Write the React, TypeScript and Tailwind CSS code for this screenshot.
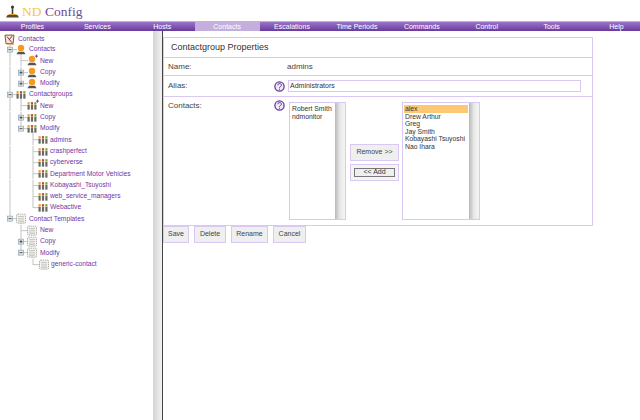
const NAV = ["Profiles", "Services", "Hosts", "Contacts", "Escalations", "Time Periods", "Commands", "Control", "Tools", "Help"];

type IconKind = "root" | "person" | "personNew" | "group" | "groupNew" | "tpl";

const Icon = ({ kind, x, y }: { kind: IconKind; x: number; y: number }) => {
  if (kind === "person" || kind === "personNew") {
    return (
      <g transform={`translate(${x} ${y})`}>
        <circle cx="0" cy="-1.6" r="3.2" fill="#f59a1f" />
        <path d="M-4.5 4.5 L-3 2 L3 2 L4.5 4.5 Z" fill="#55554c" />
        {kind === "personNew" && <path d="M3 -4.5h3M4.5 -6v3" stroke="#7a3fb0" strokeWidth="1" />}
      </g>
    );
  }
  if (kind === "group" || kind === "groupNew") {
    return (
      <g transform={`translate(${x} ${y})`}>
        <rect x="-4.5" y="-3.5" width="2.2" height="2.4" fill="#e8a030" />
        <rect x="-1.1" y="-3.5" width="2.2" height="2.4" fill="#c04a38" />
        <rect x="2.3" y="-3.5" width="2.2" height="2.4" fill="#7fa838" />
        <rect x="-4.5" y="-0.8" width="2.2" height="4.8" fill="#6a6a62" />
        <rect x="-1.1" y="-0.8" width="2.2" height="4.8" fill="#6a6a62" />
        <rect x="2.3" y="-0.8" width="2.2" height="4.8" fill="#6a6a62" />
        {kind === "groupNew" && <path d="M4 -4.5h3M5.5 -6v3" stroke="#7a3fb0" strokeWidth="1" />}
      </g>
    );
  }
  if (kind === "tpl") {
    return (
      <g transform={`translate(${x} ${y})`}>
        <rect x="-4.5" y="-4.5" width="9" height="9" rx="1" fill="#f4f4f2" stroke="#8c8c88" strokeWidth="0.7" strokeDasharray="1.4 0.8" />
        <path d="M-3 -2.2h6M-3 -0.4h6M-3 1.4h6M-3 3h6" stroke="#b5b5b0" strokeWidth="0.7" />
      </g>
    );
  }
  return (
    <g transform={`translate(${x} ${y})`}>
      <path d="M-5 -4.5h9l-1 8.5h-7z" fill="#f5ead0" stroke="#6b4a2a" strokeWidth="0.9" />
      <path d="M-3 -3l5 6M2 -3.5l-3 4" stroke="#8a2a60" strokeWidth="1" />
      <path d="M-3 4.5h7" stroke="#e09030" strokeWidth="1" />
    </g>
  );
};

type Row = {
  label: string;
  icon: IconKind;
  iconX: number;
  labelX: number;
  exp?: { x: number; open: boolean };
  // vertical guides through this row: [x, from, to]
  v?: [number, number, number][];
  // horizontal connector: [from, to]
  h?: [number, number];
};

const H = 11.3;

const ROWS: Row[] = [
  { label: "Contacts", icon: "person", iconX: 21, labelX: 29, exp: { x: 10, open: true }, v: [[10, 0, H], [21, 8, H]] },
  { label: "New", icon: "personNew", iconX: 32, labelX: 40, v: [[10, 0, H], [21, 0, H]], h: [21, 28] },
  { label: "Copy", icon: "person", iconX: 32, labelX: 40, exp: { x: 21, open: false }, v: [[10, 0, H], [21, 0, H]] },
  { label: "Modify", icon: "person", iconX: 32, labelX: 40, exp: { x: 21, open: false }, v: [[10, 0, H], [21, 0, 6]] },
  { label: "Contactgroups", icon: "group", iconX: 21, labelX: 29, exp: { x: 10, open: true }, v: [[10, 0, H], [21, 8, H]] },
  { label: "New", icon: "groupNew", iconX: 32, labelX: 40, v: [[10, 0, H], [21, 0, H]], h: [21, 28] },
  { label: "Copy", icon: "group", iconX: 32, labelX: 40, exp: { x: 21, open: false }, v: [[10, 0, H], [21, 0, H]] },
  { label: "Modify", icon: "group", iconX: 32, labelX: 40, exp: { x: 21, open: true }, v: [[10, 0, H], [21, 0, 6], [33, 8, H]] },
  ...["admins", "crashperfect", "cyberverse", "Department Motor Vehicles", "Kobayashi_Tsuyoshi", "web_service_managers", "Webactive"].map(
    (label, i): Row => ({
      label,
      icon: "group",
      iconX: 43,
      labelX: 50,
      v: [[10, 0, H], [33, 0, i === 6 ? 6 : H]],
      h: [33, 39],
    }),
  ),
  { label: "Contact Templates", icon: "tpl", iconX: 21, labelX: 29, exp: { x: 10, open: true }, v: [[10, 0, 6], [21, 8, H]] },
  { label: "New", icon: "tpl", iconX: 32, labelX: 40, v: [[21, 0, H]], h: [21, 28] },
  { label: "Copy", icon: "tpl", iconX: 32, labelX: 40, exp: { x: 21, open: false }, v: [[21, 0, H]] },
  { label: "Modify", icon: "tpl", iconX: 32, labelX: 40, exp: { x: 21, open: true }, v: [[21, 0, 6], [33, 8, H]] },
  { label: "generic-contact", icon: "tpl", iconX: 44, labelX: 51, v: [[33, 0, 6]], h: [33, 40] },
];

const TreeRow = ({ row }: { row: Row }) => {
  const cy = H / 2;
  return (
    <div className="flex h-[11.3px] items-center">
      <svg width={row.labelX} height={H} className="shrink-0 overflow-visible">
        {row.v?.map(([x, a, b], i) => (
          <line key={i} x1={x} x2={x} y1={a} y2={b} stroke="#c4c4c0" strokeWidth="1" />
        ))}
        {row.h && <line x1={row.h[0]} x2={row.h[1]} y1={cy} y2={cy} stroke="#c4c4c0" strokeWidth="1" />}
        {row.exp && <line x1={row.exp.x} x2={row.iconX - 4} y1={cy} y2={cy} stroke="#c4c4c0" strokeWidth="1" />}
        {row.exp && (
          <g>
            <rect x={row.exp.x - 2.5} y={cy - 2.5} width="5" height="5" fill="#dfe6ea" stroke="#8fa4ae" strokeWidth="0.7" />
            <path d={`M${row.exp.x - 1.5} ${cy}h3`} stroke="#333" strokeWidth="0.8" />
            {!row.exp.open && <path d={`M${row.exp.x} ${cy - 1.5}v3`} stroke="#333" strokeWidth="0.8" />}
          </g>
        )}
        <Icon kind={row.icon} x={row.iconX} y={cy} />
      </svg>
      <span className="whitespace-nowrap text-[6.7px] leading-none text-[#7036a6]">{row.label}</span>
    </div>
  );
};

const HelpIcon = () => (
  <svg width="11" height="11" viewBox="0 0 11 11" className="shrink-0">
    <circle cx="5.5" cy="5.5" r="4.6" fill="#efe8f6" stroke="#6a3a98" strokeWidth="1.3" />
    <path d="M3.8 4.2a1.8 1.6 0 1 1 2.6 1.4c-.6.3-.9.6-.9 1.2" fill="none" stroke="#6a3a98" strokeWidth="1" />
    <circle cx="5.5" cy="8.2" r=".6" fill="#6a3a98" />
  </svg>
);

const Btn = ({ label, w }: { label: string; w: string }) => (
  <div className={`flex h-[17px] items-center justify-center border border-[#d9c9f2] bg-[#efefef] text-[7px] text-[#444] ${w}`}>{label}</div>
);

const ListBox = ({ items, width, selected }: { items: string[]; width: string; selected?: string }) => (
  <div className={`flex h-[118px] border border-[#d9c9f2] bg-white ${width}`}>
    <div className="flex-1 pl-[1px] pr-[1px] pt-[2px] text-[6.8px] leading-[7.6px] text-[#333]">
      {items.map((item) => (
        <div key={item} className={item === selected ? "bg-[#fdc873] pl-[1px]" : "pl-[1px]"}>
          {item}
        </div>
      ))}
    </div>
    <div className="w-[10px] bg-gradient-to-r from-[#b8b8b8] via-[#e8e8e8] to-[#f5f5f5]" />
  </div>
);

export default function App() {
  return (
    <div className="h-[420px] w-[640px] overflow-hidden bg-white font-['Liberation_Sans',sans-serif]">
      <header className="flex h-[21px] items-center pl-[6px] pt-[2px]">
        <svg width="13" height="13" viewBox="0 0 13 13">
          <path d="M0 12.5h13l-1.5-2.5h-10z" fill="#5a4a30" />
          <path d="M6.5 1.5v8.5" stroke="#4a4030" strokeWidth="1.6" />
          <circle cx="6.5" cy="2" r="1.5" fill="#3a3226" />
          <path d="M2.5 9.5h8" stroke="#d8a030" strokeWidth="1" />
        </svg>
        <span className="ml-[3px] font-['Liberation_Serif',serif] text-[13.5px] leading-none">
          <span className="text-[#f6c545]">ND</span> <span className="text-[#6f4a9e]">Config</span>
        </span>
      </header>
      <nav className="grid h-[10px] grid-cols-[repeat(10,64.9px)] overflow-hidden border-t border-[#c7ace6] bg-gradient-to-b from-[#9c74c8] to-[#6a3a9e]">
        {NAV.map((item) => (
          <div
            key={item}
            className={`flex items-center justify-center text-[7px] leading-none text-white ${item === "Contacts" ? "bg-[#c4aedd]" : ""}`}
          >
            {item}
          </div>
        ))}
      </nav>
      <div className="flex h-[389px]">
        <aside className="w-[153px] pt-[4px]">
          <div className="flex h-[9px] items-center">
            <svg width={18} height={H} className="shrink-0 overflow-visible">
              <Icon kind="root" x={10} y={H / 2} />
            </svg>
            <span className="whitespace-nowrap text-[6.7px] leading-none text-[#7036a6]">Contacts</span>
          </div>
          {ROWS.map((row, i) => (
            <TreeRow key={i} row={row} />
          ))}
        </aside>
        <div className="w-[10px] border-r border-[#444] bg-gradient-to-r from-[#d4d4d4] to-[#f2f2f2]" />
        <main className="w-[430px] pt-[6px]">
          <section className="border border-[#d9c9f2]">
            <div className="flex h-[20px] items-center border-b border-[#d9c9f2] pl-[7px] text-[9px] text-[#333]">Contactgroup Properties</div>
            <div className="flex h-[18px] items-center border-b border-[#d9c9f2] pl-[4px] text-[8px] text-[#444]">
              <span className="w-[119px]">Name:</span>
              <span>admins</span>
            </div>
            <div className="flex h-[21px] items-center border-b border-[#d9c9f2] pl-[4px] text-[8px] text-[#444]">
              <span className="w-[106px]">Alias:</span>
              <HelpIcon />
              <div className="ml-[3px] flex h-[12px] w-[293px] items-center border border-[#d9c9f2] pl-[1px] text-[7px] text-[#333]">Administrators</div>
            </div>
            <div className="flex h-[128px] pl-[4px] pt-[3px] text-[8px] text-[#444]">
              <span className="w-[106px]">Contacts:</span>
              <div className="flex items-start">
                <HelpIcon />
                <div className="ml-[4px] mt-[2px]">
                  <ListBox items={["Robert Smith", "ndmonitor"]} width="w-[57px]" />
                </div>
                <div className="ml-[4px] mt-[44px] flex w-[49px] flex-col gap-[3px]">
                  <div className="flex h-[17px] items-center justify-center border border-[#d9c9f2] bg-[#efefef] text-[7px] text-[#444]">Remove &gt;&gt;</div>
                  <div className="flex h-[17px] items-center justify-center border border-[#d9c9f2] bg-[#f4f4f4]">
                    <div className="flex h-[9px] w-[41px] items-center justify-center border border-[#777] bg-[#efefef] text-[7px] text-[#333]">&lt;&lt; Add</div>
                  </div>
                </div>
                <div className="ml-[3px] mt-[2px]">
                  <ListBox items={["alex", "Drew Arthur", "Greg", "Jay Smith", "Kobayashi Tsuyoshi", "Nao Ihara"]} width="w-[78px]" selected="alex" />
                </div>
              </div>
            </div>
          </section>
          <div className="flex gap-[5px]">
            <Btn label="Save" w="w-[26px]" />
            <Btn label="Delete" w="w-[32px]" />
            <Btn label="Rename" w="w-[37px]" />
            <Btn label="Cancel" w="w-[33px]" />
          </div>
        </main>
      </div>
    </div>
  );
}
